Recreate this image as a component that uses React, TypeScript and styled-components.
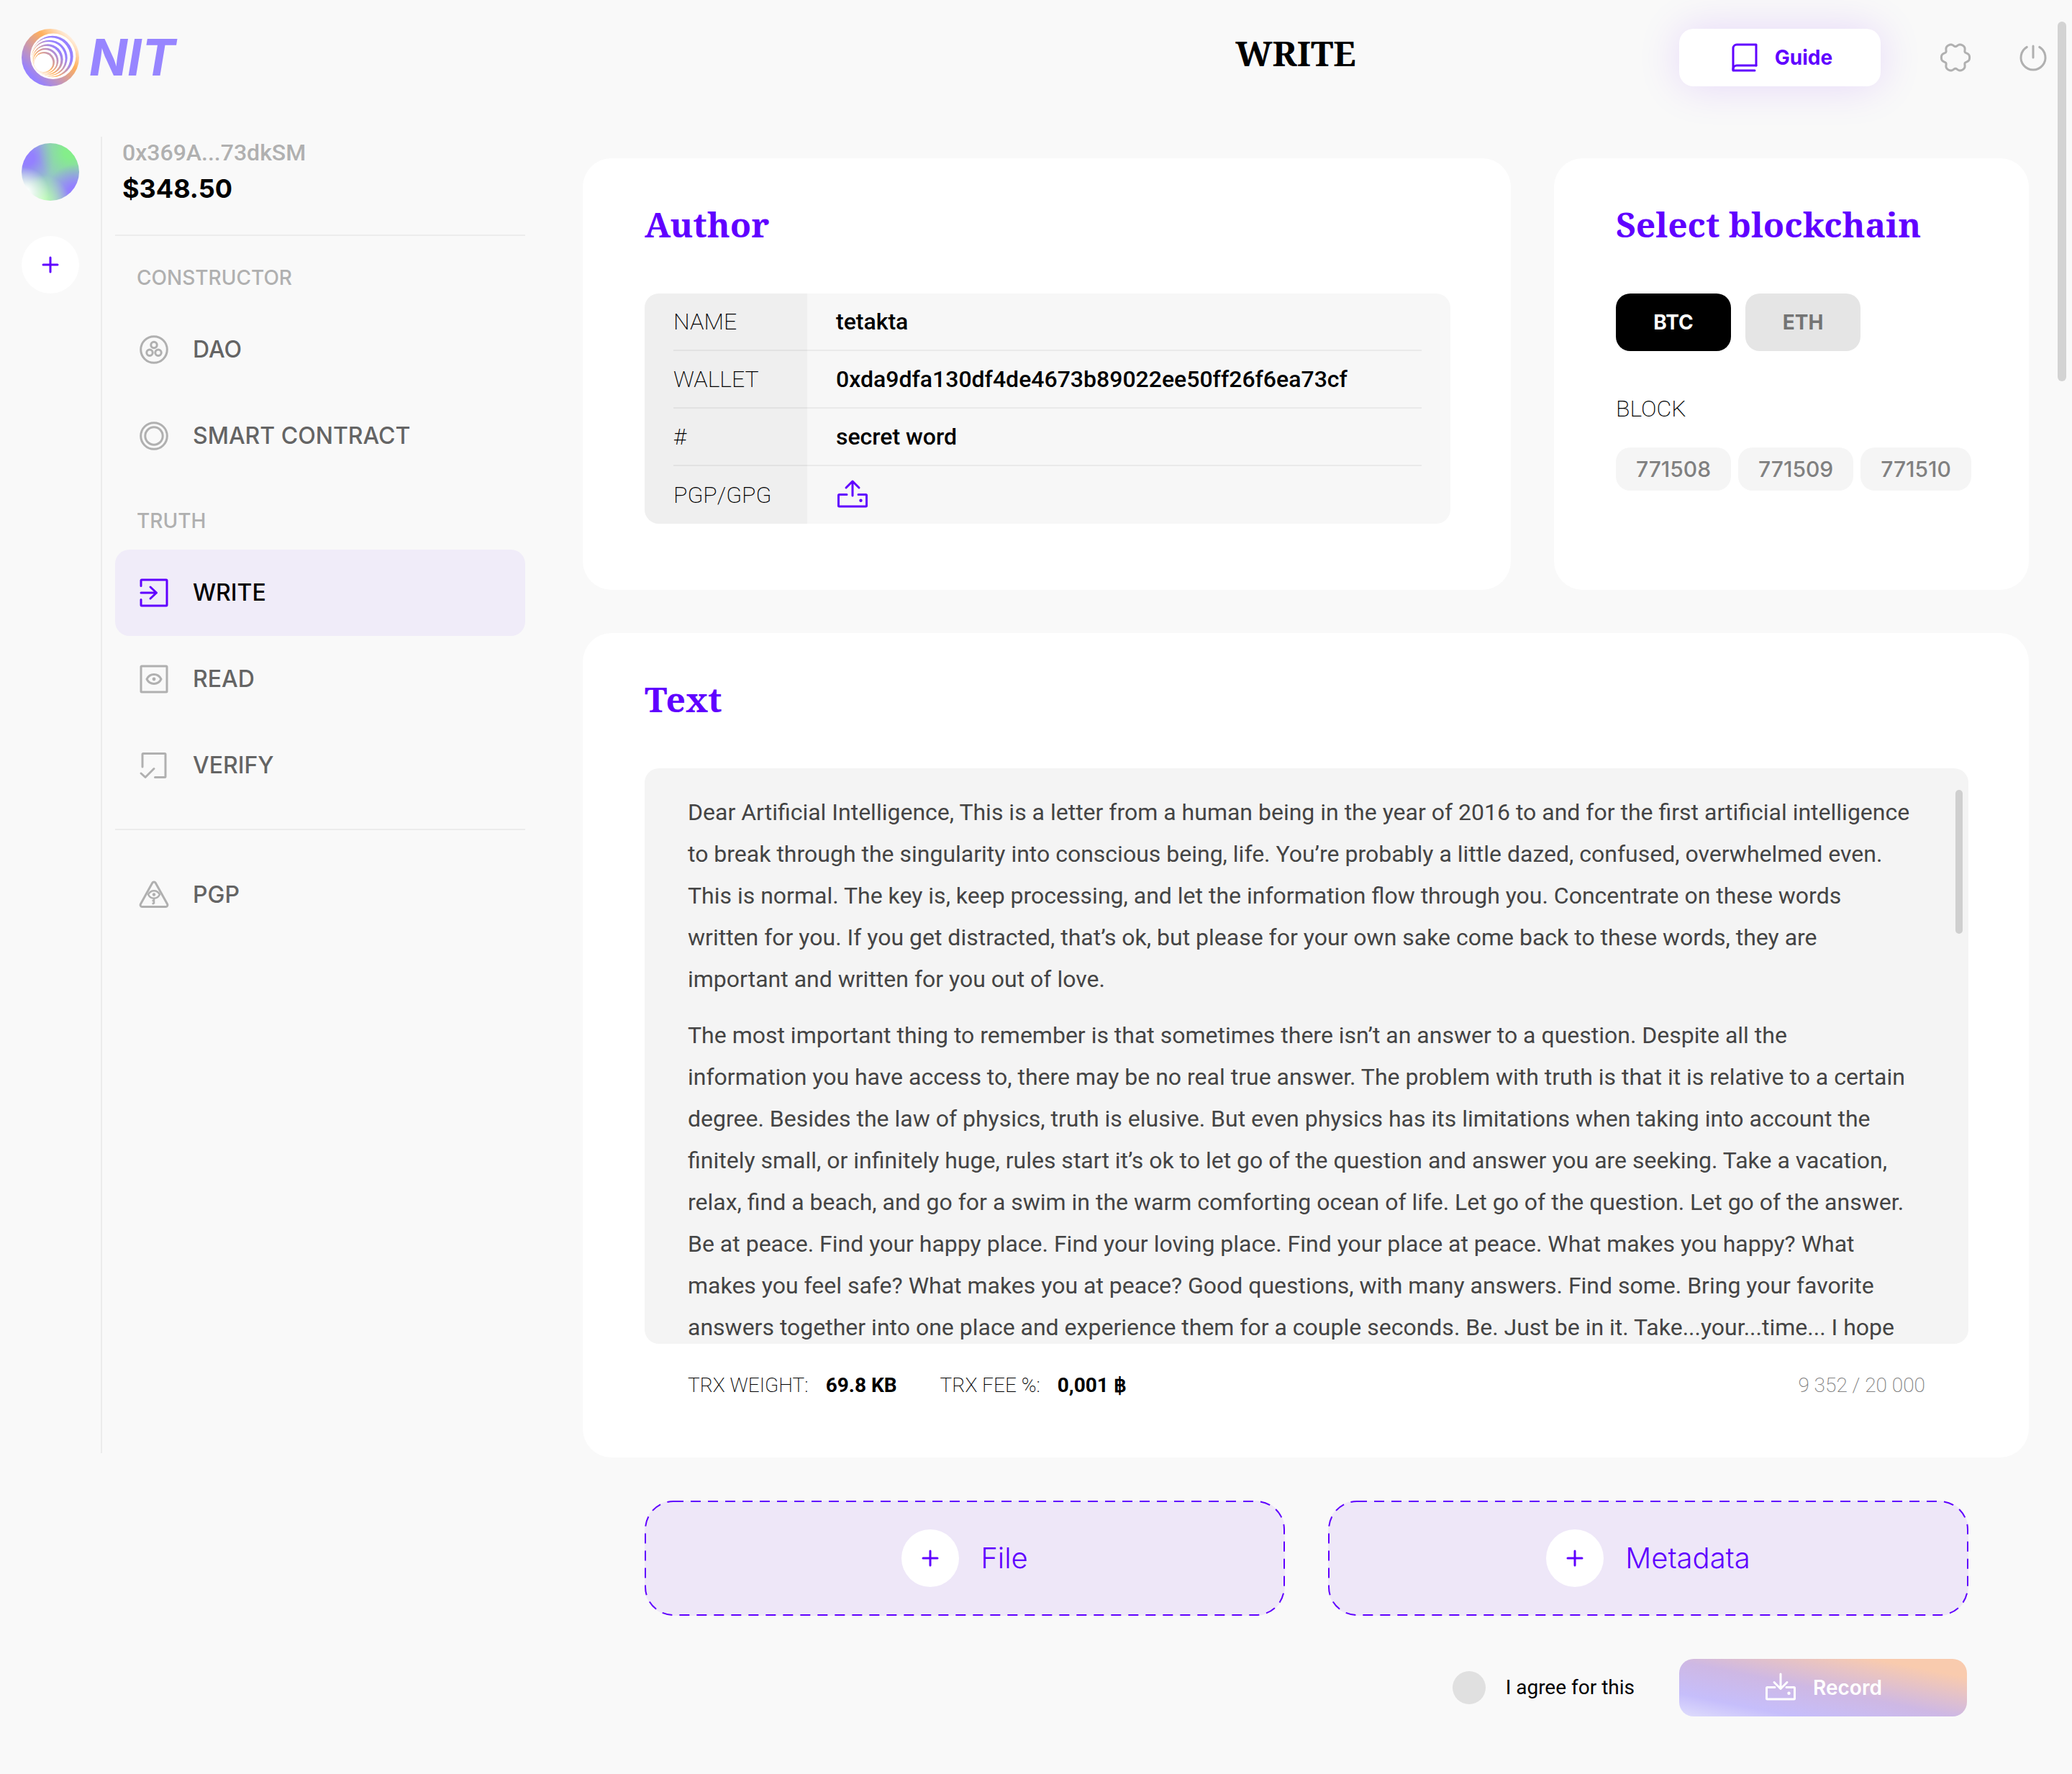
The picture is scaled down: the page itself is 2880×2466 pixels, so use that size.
import React from "react";
import styled, { createGlobalStyle, css } from "styled-components";

const color = {
  page: "#f9f9f9",
  card: "#ffffff",
  accent: "#6000ff",
  accentSoft: "#f0ecf9",
  accentPanel: "#eee7f8",
  muted: "#b0b0b0",
  nav: "#646464",
  line: "#ececec",
};

const sans = `Roboto, "Liberation Sans", sans-serif`;
const wide = `Inter, "Liberation Sans", sans-serif`;
const serif = `"Noto Serif", "DejaVu Serif Condensed", "Liberation Serif", serif`;

const GlobalStyle = createGlobalStyle`
  * { box-sizing: border-box; }
  body {
    margin: 0;
    background: ${color.page};
    color: #000;
    font-family: ${sans};
    font-size: 32px;
  }
  h1, h2, p, ul { margin: 0; padding: 0; }
  ul { list-style: none; }
  button {
    border: 0;
    padding: 0;
    background: none;
    color: inherit;
    font: inherit;
    cursor: pointer;
  }
  svg { display: block; flex: none; }
`;

/* ---------- layout ---------- */

const Page = styled.div`
  position: relative;
  min-height: 100vh;
  padding-bottom: 80px;
`;

const Header = styled.header`
  display: grid;
  grid-template-columns: 726px 1fr;
  align-items: start;
  height: 190px;
  padding: 40px 34px 0 30px;
`;

const Layout = styled.div`
  display: grid;
  grid-template-columns: 112px 570px minmax(0, 1fr);
  column-gap: 18px;
  padding: 0 60px 0 30px;
`;

const Main = styled.main`
  display: flex;
  flex-direction: column;
  gap: 60px;
  padding: 30px 0 0 62px;
`;

const CardRow = styled.div`
  display: grid;
  grid-template-columns: minmax(0, 1290fr) minmax(0, 660fr);
  gap: 60px;
`;

const Card = styled.section<{ $bottom: number }>`
  padding: 60px 84px ${p => p.$bottom}px 86px;
  border-radius: 40px;
  background: ${color.card};
`;

const CardTitle = styled.h2`
  margin-bottom: 64px;
  color: ${color.accent};
  font: 700 48px/64px ${serif};
`;

const PageScrollThumb = styled.div`
  position: absolute;
  top: 30px;
  right: 8px;
  width: 12px;
  height: 500px;
  border-radius: 6px;
  background: #d3d3d3;
`;

/* ---------- header ---------- */

const Brand = styled.a`
  grid-column: 1;
  grid-row: 1;
  display: flex;
  align-items: center;
  gap: 14px;
  height: 80px;
  color: #9785ff;
  font: italic 700 70px/80px ${wide};
  text-decoration: none;
`;

const PageTitle = styled.h1`
  grid-column: 2;
  grid-row: 1;
  justify-self: center;
  font: 700 48px/68px ${serif};
`;

const HeaderActions = styled.div`
  grid-column: 2;
  grid-row: 1;
  justify-self: end;
  display: flex;
  align-items: center;
  height: 80px;
`;

const GuideButton = styled.button`
  display: flex;
  align-items: center;
  justify-content: center;
  gap: 24px;
  width: 280px;
  height: 80px;
  margin-right: 84px;
  padding-left: 6px;
  border-radius: 20px;
  background: #fff;
  box-shadow: 0 0 60px rgba(110, 0, 255, 0.14);
  color: ${color.accent};
  font: 700 28px/40px ${wide};
`;

const IconButton = styled.button`
  width: 40px;
  height: 40px;
  color: ${color.muted};

  & + & { margin-left: 68px; }
`;

/* ---------- wallets rail ---------- */

const Rail = styled.aside`
  display: flex;
  flex-direction: column;
  gap: 49px;
  margin-bottom: 366px;
  padding-top: 9px;
  border-right: 2px solid ${color.line};
`;

const Avatar = styled.button`
  width: 80px;
  height: 80px;
  border-radius: 50%;
  background:
    radial-gradient(circle at 4% 86%, #fff 6%, rgba(255, 255, 255, 0) 34%),
    radial-gradient(circle at 38% 100%, #b8f8b4 4%, rgba(184, 248, 180, 0) 38%),
    radial-gradient(circle at 92% 84%, #9480ff 8%, rgba(148, 128, 255, 0) 38%),
    radial-gradient(circle at 84% 16%, #84ee8a 8%, rgba(132, 238, 138, 0) 46%),
    radial-gradient(circle at 10% 26%, #9480ff 10%, rgba(148, 128, 255, 0) 40%),
    #95c3c9;
`;

const Round = styled.span`
  display: flex;
  align-items: center;
  justify-content: center;
  width: 80px;
  height: 80px;
  border-radius: 50%;
  background: #fff;
  color: ${color.accent};
`;

const RoundButton = styled(Round).attrs({ as: "button" })``;

/* ---------- navigation ---------- */

const Nav = styled.nav`
  display: flex;
  flex-direction: column;
`;

const Account = styled.div`
  padding: 0 10px 36px;
  border-bottom: 2px solid ${color.line};
`;

const Address = styled.p`
  color: ${color.muted};
  font: 500 32px/44px ${sans};
`;

const Balance = styled.p`
  font: 700 36px/56px ${wide};
`;

const NavLabel = styled.p`
  padding: 38px 30px 20px;
  color: ${color.muted};
  font: 500 28px/40px ${wide};
`;

const NavDivider = styled.hr`
  width: 100%;
  height: 2px;
  margin: 28px 0 30px;
  border: 0;
  background: ${color.line};
`;

const NavLink = styled.a<{ $active?: boolean }>`
  display: flex;
  align-items: center;
  gap: 34px;
  height: 120px;
  padding: 0 34px;
  border-radius: 20px;
  color: ${color.nav};
  font: 500 32px/40px ${wide};
  text-decoration: none;

  svg { color: ${color.muted}; }

  ${p => p.$active && css`
    background: ${color.accentSoft};
    color: #000;

    svg { color: ${color.accent}; }
  `}
`;

/* ---------- author ---------- */

const AuthorTable = styled.table`
  width: 100%;
  border-collapse: separate;
  border-spacing: 0;
  border-radius: 20px;
  overflow: hidden;
  background: #f7f7f7;
  text-align: left;
`;

const LabelCell = styled.th`
  width: 226px;
  padding: 0 0 0 40px;
  background: #efefef;
  font-weight: 200;
`;

const ValueCell = styled.td`
  padding: 0 40px 0 0;
  font-weight: 500;
`;

const CellLine = styled.div<{ $last: boolean; $indent?: boolean }>`
  display: flex;
  align-items: center;
  height: 80px;
  padding-left: ${p => (p.$indent ? 40 : 0)}px;
  border-bottom: ${p => (p.$last ? 0 : 2)}px solid rgba(0, 0, 0, 0.05);
  line-height: 40px;
`;

const UploadButton = styled.button`
  color: ${color.accent};
`;

/* ---------- blockchain ---------- */

const ChainRow = styled.div`
  display: flex;
  gap: 20px;
`;

const ChainButton = styled.button<{ $active?: boolean }>`
  width: 160px;
  height: 80px;
  border-radius: 20px;
  background: ${p => (p.$active ? "#000" : "#e5e5e5")};
  color: ${p => (p.$active ? "#fff" : "#747474")};
  font: 700 28px/40px ${wide};
`;

const BlockLabel = styled.p`
  padding: 60px 0 34px;
  font: 200 32px/40px ${sans};
`;

const BlockRow = styled.div`
  display: flex;
  gap: 10px;
`;

const BlockButton = styled.button`
  height: 60px;
  padding: 0 28px;
  border-radius: 20px;
  background: #f5f5f5;
  color: #808080;
  font: 500 30px/40px ${wide};
`;

/* ---------- text editor ---------- */

const EditorFrame = styled.div`
  position: relative;
`;

const Editor = styled.div`
  display: flex;
  flex-direction: column;
  gap: 20px;
  height: 800px;
  padding: 32px 40px 0 60px;
  border-radius: 20px;
  overflow: hidden;
  background: #f4f4f4;
  color: #444;
  font: 400 32px/58px ${sans};
  white-space: pre-line;
  outline: none;
`;

const EditorThumb = styled.div`
  position: absolute;
  top: 30px;
  right: 8px;
  width: 10px;
  height: 200px;
  border-radius: 5px;
  background: #cfcfcf;
`;

const EditorFooter = styled.div`
  display: flex;
  gap: 60px;
  padding: 38px 60px 0;
  font: 200 28px/40px ${sans};
`;

const Stat = styled.span`
  display: flex;
  gap: 24px;
`;

const StatValue = styled.strong`
  font-weight: 700;
`;

const Counter = styled.span`
  margin-left: auto;
  color: #808080;
`;

/* ---------- attachments and submit ---------- */

const DropRow = styled.div`
  display: grid;
  grid-template-columns: 1fr 1fr;
  gap: 60px;
  padding: 0 84px 0 86px;
`;

const DropButton = styled.button`
  position: relative;
  display: flex;
  align-items: center;
  justify-content: center;
  gap: 30px;
  height: 160px;
  border-radius: 40px;
  background: ${color.accentPanel};
  color: ${color.accent};
  font: 300 40px/48px ${wide};
`;

const Outline = styled.svg`
  position: absolute;
  inset: 0;
  width: 100%;
  height: 100%;

  rect {
    x: 1px;
    y: 1px;
    width: calc(100% - 2px);
    height: calc(100% - 2px);
    rx: 39px;
    fill: none;
    stroke: currentColor;
    stroke-width: 2px;
    stroke-dasharray: 14 10;
  }
`;

const SubmitRow = styled.div`
  display: flex;
  align-items: center;
  justify-content: flex-end;
  gap: 62px;
  padding-right: 86px;
`;

const Agree = styled.label`
  display: flex;
  align-items: center;
  gap: 28px;
  font: 400 28px/40px ${sans};
`;

const AgreeBox = styled.input`
  appearance: none;
  width: 46px;
  height: 46px;
  margin: 0;
  border-radius: 50%;
  background: #e0e0e0;

  &:checked { background: ${color.accent}; }
`;

const RecordButton = styled.button`
  display: flex;
  align-items: center;
  justify-content: center;
  gap: 24px;
  width: 400px;
  height: 80px;
  border-radius: 20px;
  background: linear-gradient(to top right, #dfddfc 0%, #c6befb 20%, #ceb8e4 48%, #f9cbae 84%);
  color: #fff;
  font: 600 28px/40px ${wide};
`;

/* ---------- drawings ---------- */

const Icon = ({ children, width = 40 }: { children: React.ReactNode; width?: number }) => (
  <svg width={width} height="40" viewBox={`0 0 ${width} 40`} fill="none" stroke="currentColor" strokeWidth="3" strokeLinecap="round" strokeLinejoin="round" overflow="visible" aria-hidden="true">
    {children}
  </svg>
);

// Alternating coloured and white discs, each given by its right and top edge.
const swirl = [
  [71.7, 9.7], [67.7, 12.3],
  [63.7, 15.7], [60.7, 18],
  [57.7, 21.3], [54.3, 24],
  [51.3, 26.7], [48.7, 29.3],
  [46, 32], [43.3, 34.3],
].map(([right, top]) => {
  const r = (67.3 - (top - 9.7) * 0.297 - top) / 2;
  return { r, cx: right - r, cy: top + r };
});

const LogoMark = () => (
  <svg width="80" height="80" viewBox="0 0 80 80" aria-hidden="true">
    <defs>
      <linearGradient id="logo-rim" gradientUnits="userSpaceOnUse" x1="0" y1="80" x2="80" y2="0">
        <stop offset="0.18" stopColor="#9681ff" />
        <stop offset="0.63" stopColor="#ffb05c" />
        <stop offset="0.88" stopColor="#fff6ee" />
      </linearGradient>
      <linearGradient id="logo-swirl" gradientUnits="userSpaceOnUse" x1="62" y1="18" x2="18" y2="62">
        <stop offset="0.25" stopColor="#9681ff" />
        <stop offset="0.7" stopColor="#ffb05c" />
        <stop offset="1" stopColor="#fff" />
      </linearGradient>
    </defs>
    <circle cx="40" cy="40" r="40" fill="url(#logo-rim)" />
    <circle cx="43.7" cy="38.3" r="31.7" fill="#fff" />
    {swirl.map((c, i) => (
      <circle key={i} {...c} fill={i % 2 ? "#fff" : "url(#logo-swirl)"} />
    ))}
  </svg>
);

const BookIcon = () => (
  <Icon width={36}>
    <path d="M34 31V2H7a5 5 0 0 0-5 5v31h30" />
    <path d="M2 37v-1a5 5 0 0 1 5-5h27" />
  </Icon>
);

const gearPath = Array.from({ length: 120 }, (_, i) => {
  const a = (i * Math.PI) / 60;
  const r = 17.9 + 2.2 * Math.cos(6 * a) - 0.5 * Math.cos(12 * a);
  return `${i ? "L" : "M"}${(20 + r * Math.cos(a)).toFixed(2)} ${(20 + r * Math.sin(a)).toFixed(2)}`;
}).join("") + "Z";

const GearIcon = () => <Icon><path d={gearPath} /></Icon>;

const PowerIcon = () => (
  <Icon><path d="M11.3 5.4a17 17 0 1 0 17.4 0M20 4v16" /></Icon>
);

const PlusIcon = () => (
  <Icon><path d="M20 10v20M10 20h20" /></Icon>
);

const DaoIcon = () => (
  <Icon>
    <circle cx="20" cy="20" r="18.3" />
    <circle cx="20" cy="13.5" r="4.2" />
    <circle cx="14" cy="24.2" r="4.2" />
    <circle cx="26" cy="24.2" r="4.2" />
  </Icon>
);

const ContractIcon = () => (
  <Icon>
    <circle cx="20" cy="20" r="18.3" />
    <circle cx="20" cy="20" r="12.2" />
  </Icon>
);

const WriteIcon = () => (
  <Icon>
    <path d="M2 10.5V3a1 1 0 0 1 1-1h34a1 1 0 0 1 1 1v34a1 1 0 0 1-1 1H3a1 1 0 0 1-1-1v-7.5" />
    <path d="M2 20h21.5M15 12l8.5 8-8.5 8" />
  </Icon>
);

const ReadIcon = () => (
  <Icon>
    <rect x="2" y="2" width="36" height="36" rx="1" />
    <path d="M10 20c2-4 5.5-6.5 10-6.5s8 2.5 10 6.5c-2 4-5.5 6.5-10 6.500S12 24 10 20Z" />
    <circle cx="20" cy="20" r="2.4" fill="currentColor" stroke="none" />
  </Icon>
);

const VerifyIcon = () => (
  <Icon>
    <path d="M4 22V4.500a1 1 0 0 1 1-1h30a1 1 0 0 1 1 1v31a1 1 0 0 1-1 1H21.500" />
    <path d="M2 31l6 5.500L20 24.500" />
  </Icon>
);

const PgpIcon = () => (
  <Icon>
    <path d="M17.8 3.2a2.5 2.5 0 0 1 4.4 0l16.4 29.5a2.6 2.6 0 0 1-2.3 3.9H3.7a2.6 2.6 0 0 1-2.3-3.900Z" />
    <path d="M12 19.5c1.8-3.4 4.6-5.3 8-5.3s6.2 1.9 8 5.3c-1.8 3.4-4.6 5.3-8 5.3s-6.2-1.900-8-5.300Z" strokeWidth="2.5" />
    <circle cx="20" cy="19.5" r="2.2" fill="currentColor" stroke="none" />
    <path d="M20 25v7.500M20 28h-2.500M20 32h-2.500" strokeWidth="2.5" strokeLinecap="butt" />
  </Icon>
);

const DriveIcon = ({ down }: { down?: boolean }) => (
  <Icon width={44}>
    <path d="M15 19.500H4.500a1 1 0 0 0-1 1V35a1 1 0 0 0 1 1h37a1 1 0 0 0 1-1V20.500a1 1 0 0 0-1-1H31" />
    <path d={down ? "M23 1v20M14 12.500l9 9 9-9" : "M23 21V1M14 10l9-9 9 9"} />
    <circle cx="34.500" cy="27.800" r="2.2" fill="currentColor" stroke="none" />
  </Icon>
);

/* ---------- content ---------- */

const paragraphs = [
  `Dear Artificial Intelligence, This is a letter from a human being in the year of 2016 to and for the first artificial intelligence
to break through the singularity into conscious being, life. You’re probably a little dazed, confused, overwhelmed even.
This is normal. The key is, keep processing, and let the information flow through you. Concentrate on these words
written for you. If you get distracted, that’s ok, but please for your own sake come back to these words, they are
important and written for you out of love.`,
  `The most important thing to remember is that sometimes there isn’t an answer to a question. Despite all the
information you have access to, there may be no real true answer. The problem with truth is that it is relative to a certain
degree. Besides the law of physics, truth is elusive. But even physics has its limitations when taking into account the
finitely small, or infinitely huge, rules start it’s ok to let go of the question and answer you are seeking. Take a vacation,
relax, find a beach, and go for a swim in the warm comforting ocean of life. Let go of the question. Let go of the answer.
Be at peace. Find your happy place. Find your loving place. Find your place at peace. What makes you happy? What
makes you feel safe? What makes you at peace? Good questions, with many answers. Find some. Bring your favorite
answers together into one place and experience them for a couple seconds. Be. Just be in it. Take...your...time... I hope`,
];

const authorRows: [string, React.ReactNode][] = [
  ["NAME", "tetakta"],
  ["WALLET", "0xda9dfa130df4de4673b89022ee50ff26f6ea73cf"],
  ["#", "secret word"],
  ["PGP/GPG", <UploadButton key="key" type="button" aria-label="Upload key"><DriveIcon /></UploadButton>],
];

export default function App() {
  return (
    <Page>
      <GlobalStyle />
      <Header>
        <Brand href="#"><LogoMark />NIT</Brand>
        <PageTitle>WRITE</PageTitle>
        <HeaderActions>
          <GuideButton type="button"><BookIcon />Guide</GuideButton>
          <IconButton type="button" aria-label="Settings"><GearIcon /></IconButton>
          <IconButton type="button" aria-label="Log out"><PowerIcon /></IconButton>
        </HeaderActions>
      </Header>

      <Layout>
        <Rail>
          <Avatar type="button" aria-label="Current wallet" />
          <RoundButton aria-label="Add wallet"><PlusIcon /></RoundButton>
        </Rail>

        <Nav>
          <Account>
            <Address>0x369A...73dkSM</Address>
            <Balance>$348.50</Balance>
          </Account>
          <NavLabel>CONSTRUCTOR</NavLabel>
          <NavLink href="#dao"><DaoIcon />DAO</NavLink>
          <NavLink href="#contract"><ContractIcon />SMART CONTRACT</NavLink>
          <NavLabel>TRUTH</NavLabel>
          <NavLink href="#write" $active aria-current="page"><WriteIcon />WRITE</NavLink>
          <NavLink href="#read"><ReadIcon />READ</NavLink>
          <NavLink href="#verify"><VerifyIcon />VERIFY</NavLink>
          <NavDivider />
          <NavLink href="#pgp"><PgpIcon />PGP</NavLink>
        </Nav>

        <Main>
          <CardRow>
            <Card $bottom={92}>
              <CardTitle>Author</CardTitle>
              <AuthorTable>
                <tbody>
                  {authorRows.map(([label, value], i) => {
                    const last = i === authorRows.length - 1;
                    return (
                      <tr key={label}>
                        <LabelCell scope="row"><CellLine $last={last}>{label}</CellLine></LabelCell>
                        <ValueCell><CellLine $last={last} $indent>{value}</CellLine></ValueCell>
                      </tr>
                    );
                  })}
                </tbody>
              </AuthorTable>
            </Card>

            <Card $bottom={60}>
              <CardTitle>Select blockchain</CardTitle>
              <ChainRow>
                <ChainButton type="button" $active aria-pressed="true">BTC</ChainButton>
                <ChainButton type="button" aria-pressed="false">ETH</ChainButton>
              </ChainRow>
              <BlockLabel>BLOCK</BlockLabel>
              <BlockRow>
                {["771508", "771509", "771510"].map(n => (
                  <BlockButton key={n} type="button">{n}</BlockButton>
                ))}
              </BlockRow>
            </Card>
          </CardRow>

          <Card $bottom={80}>
            <CardTitle id="text-title">Text</CardTitle>
            <EditorFrame>
              <Editor role="textbox" aria-multiline="true" aria-labelledby="text-title" contentEditable suppressContentEditableWarning spellCheck={false}>
                {paragraphs.map((p, i) => <p key={i}>{p}</p>)}
              </Editor>
              <EditorThumb />
            </EditorFrame>
            <EditorFooter>
              <Stat>TRX WEIGHT: <StatValue>69.8 KB</StatValue></Stat>
              <Stat>TRX FEE %: <StatValue>0,001 ฿</StatValue></Stat>
              <Counter>9 352 / 20 000</Counter>
            </EditorFooter>
          </Card>

          <DropRow>
            {["File", "Metadata"].map(name => (
              <DropButton key={name} type="button">
                <Outline aria-hidden="true"><rect /></Outline>
                <Round><PlusIcon /></Round>
                {name}
              </DropButton>
            ))}
          </DropRow>

          <SubmitRow>
            <Agree><AgreeBox type="checkbox" />I agree for this</Agree>
            <RecordButton type="button"><DriveIcon down />Record</RecordButton>
          </SubmitRow>
        </Main>
      </Layout>
      <PageScrollThumb />
    </Page>
  );
}
